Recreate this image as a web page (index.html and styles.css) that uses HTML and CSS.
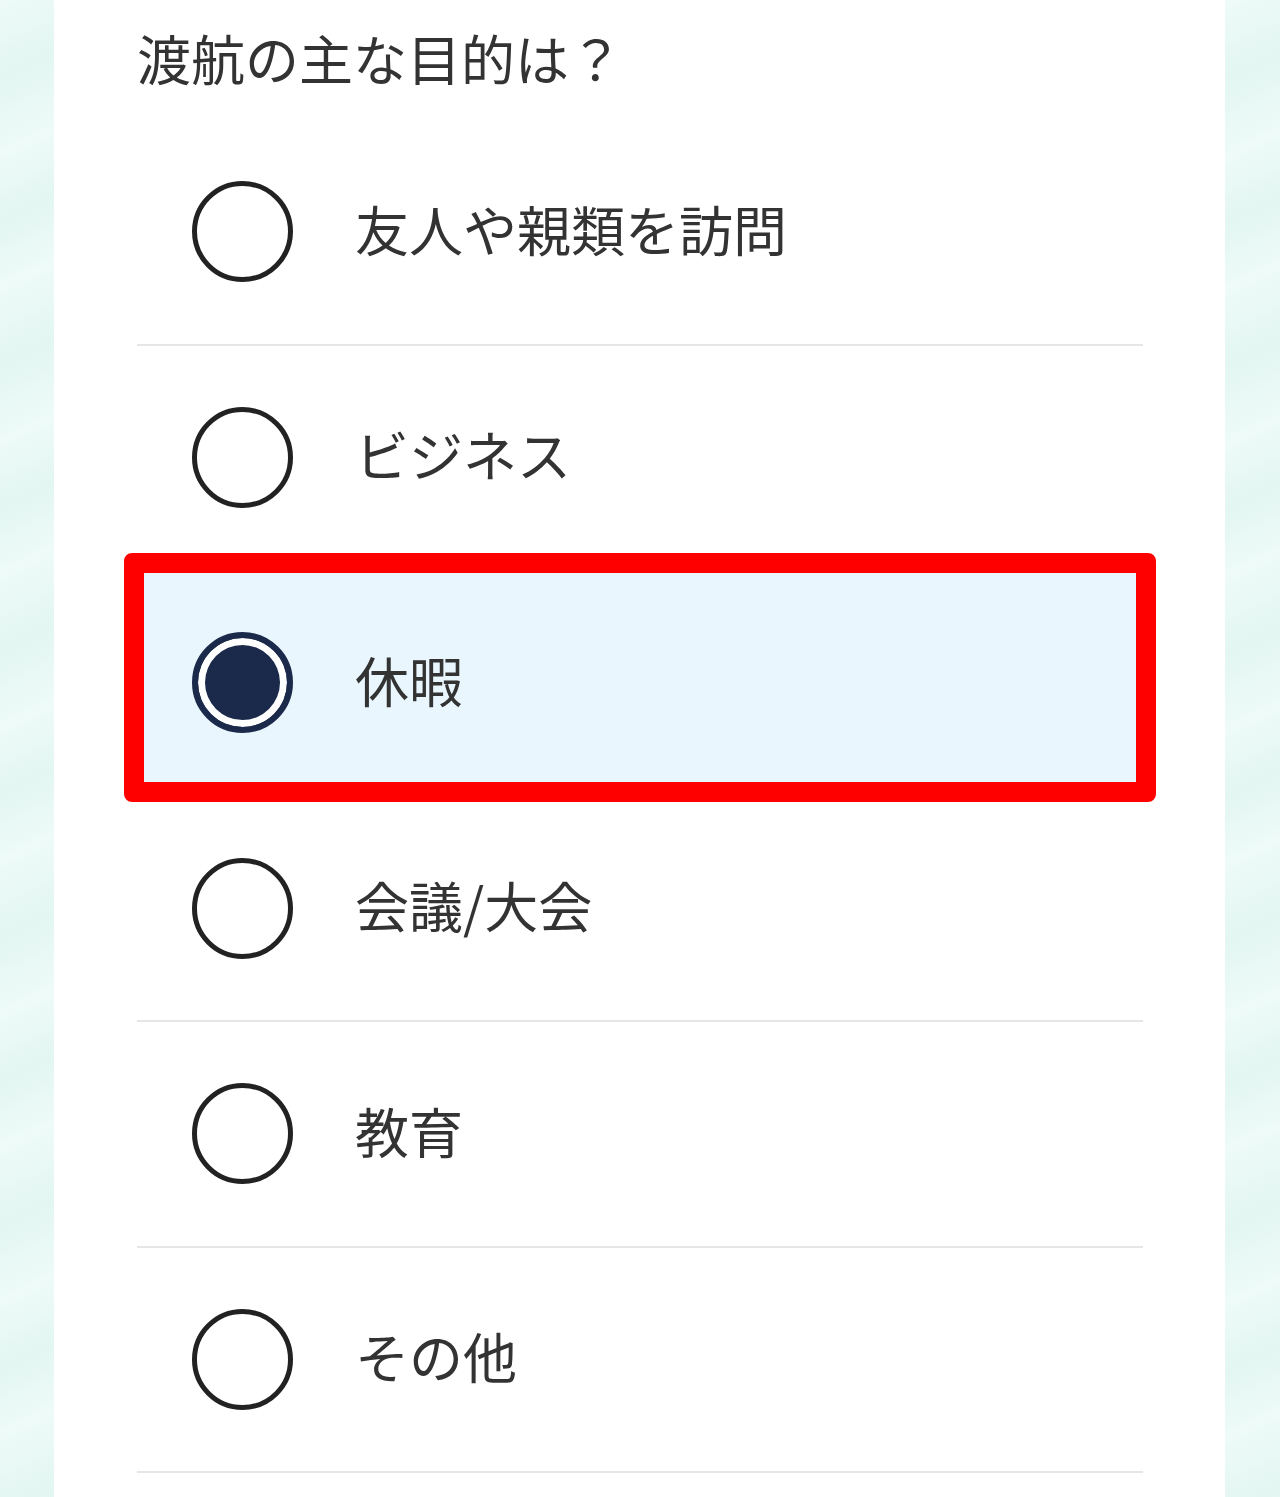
FILE: index.html
```html
<!DOCTYPE html>
<html lang="ja">
<head>
    <meta charset="UTF-8">
    <meta name="viewport" content="width=device-width, initial-scale=1.0">
    <title>渡航の目的</title>
    <link rel="stylesheet" href="styles.css">
</head>
<body>
    <div class="page">
        <div class="card">
            <h1 class="question">渡航の主な目的は？</h1>

            <div class="options">
                <label class="option">
                    <span class="radio"></span>
                    <span class="option-label">友人や親類を訪問</span>
                </label>
                <label class="option">
                    <span class="radio"></span>
                    <span class="option-label">ビジネス</span>
                </label>
                <label class="option selected">
                    <span class="radio"></span>
                    <span class="option-label">休暇</span>
                </label>
                <label class="option">
                    <span class="radio"></span>
                    <span class="option-label">会議/大会</span>
                </label>
                <label class="option">
                    <span class="radio"></span>
                    <span class="option-label">教育</span>
                </label>
                <label class="option">
                    <span class="radio"></span>
                    <span class="option-label">その他</span>
                </label>
            </div>
        </div>
    </div>
</body>
</html>
```

FILE: styles.css
```css
:root {
    --text: #333333;
    --navy: #1b2a4a;
    --line: #e6e6e6;
    --mint: #e3f6f1;
    --mint-light: #eefbf8;
    --highlight: #e9f6fd;
    --annotation: #ff0000;
}

* {
    margin: 0;
    padding: 0;
    box-sizing: border-box;
}

body {
    font-family: "Noto Sans CJK JP", "Noto Sans", sans-serif;
    color: var(--text);
    background:
        repeating-linear-gradient(155deg, var(--mint-light) 0, var(--mint) 70px, var(--mint-light) 140px, var(--mint) 200px, var(--mint-light) 260px),
        var(--mint);
    min-height: 100vh;
}

.page {
    display: flex;
    justify-content: center;
    padding-left: 54px;
    padding-right: 55px;
}

.card {
    flex: 1;
    background: #fff;
    min-height: 1497px;
    padding: 0 82px 0 83px;
}

.question {
    font-size: 54px;
    font-weight: 400;
    line-height: 116px;
    padding-bottom: 4px;
}

.options {
    display: flex;
    flex-direction: column;
}

.option {
    display: flex;
    align-items: center;
    gap: 62px;
    height: 225.5px;
    padding-left: 55px;
    border-bottom: 2px solid var(--line);
    position: relative;
}

.radio {
    width: 101px;
    height: 101px;
    border-radius: 50%;
    border: 5px solid #222;
    flex-shrink: 0;
}

.option-label {
    font-size: 54px;
    line-height: 1;
    padding-bottom: 6px;
    position: relative;
    z-index: 1;
}

/* selected state */
.option.selected .radio {
    border: 6px solid var(--navy);
    background: var(--navy);
    box-shadow: inset 0 0 0 7px #fff;
    position: relative;
    z-index: 1;
}

/* red annotation frame around the chosen answer */
.option.selected::before {
    content: '';
    position: absolute;
    left: -13px;
    right: -13px;
    top: -18px;
    bottom: -7px;
    background: var(--highlight);
    border: 20px solid var(--annotation);
    border-radius: 8px;
}
```
